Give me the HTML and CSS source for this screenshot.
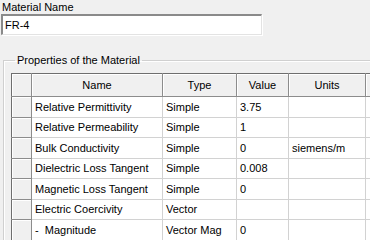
FILE: index.html
```html
<!DOCTYPE html>
<html lang="en">
<head>
    <meta charset="UTF-8">
    <title>Material Properties</title>
    <link rel="stylesheet" href="styles.css">
</head>
<body>

    <!-- Material name -->
    <div class="name-field">
        <label for="mat-name">Material Name</label>
        <div class="textbox" id="mat-name">FR-4</div>
    </div>

    <!-- Properties group -->
    <fieldset class="group">
        <legend>Properties of the Material</legend>
        <table class="grid">
            <colgroup>
                <col class="c-row">
                <col class="c-name">
                <col class="c-type">
                <col class="c-value">
                <col class="c-units">
                <col class="c-rest">
            </colgroup>
            <thead>
                <tr>
                    <th class="corner"></th>
                    <th>Name</th>
                    <th>Type</th>
                    <th>Value</th>
                    <th>Units</th>
                    <th class="rest"></th>
                </tr>
            </thead>
            <tbody>
                <tr><th class="rh"></th><td>Relative Permittivity</td><td>Simple</td><td>3.75</td><td></td><td class="rest"></td></tr>
                <tr><th class="rh"></th><td>Relative Permeability</td><td>Simple</td><td>1</td><td></td><td class="rest"></td></tr>
                <tr><th class="rh"></th><td>Bulk Conductivity</td><td>Simple</td><td>0</td><td>siemens/m</td><td class="rest"></td></tr>
                <tr><th class="rh"></th><td>Dielectric Loss Tangent</td><td>Simple</td><td>0.008</td><td></td><td class="rest"></td></tr>
                <tr><th class="rh"></th><td>Magnetic Loss Tangent</td><td>Simple</td><td>0</td><td></td><td class="rest"></td></tr>
                <tr><th class="rh"></th><td>Electric Coercivity</td><td>Vector</td><td></td><td></td><td class="rest"></td></tr>
                <tr><th class="rh"></th><td>-&nbsp;&nbsp;Magnitude</td><td>Vector Mag</td><td>0</td><td></td><td class="rest"></td></tr>
            </tbody>
        </table>
    </fieldset>

</body>
</html>
```

FILE: styles.css
```css
body {
    margin: 0;
    background: #f0f0f0;
    font-family: "Liberation Sans", Arial, sans-serif;
    font-size: 11px;
    color: #000;
    height: 240px;
    overflow: hidden;
}
.name-field {
    padding: 1px 0 0 1px;
}
.name-field label {
    display: block;
    padding-left: 1px;
    height: 13px;
    line-height: 13px;
}
.textbox {
    width: 254px;
    height: 18px;
    line-height: 19px;
    padding: 0 2px;
    background: #fff;
    border-top: 2px solid #8a8a8a;
    border-left: 2px solid #8a8a8a;
    border-right: 1px solid #e3e3e3;
    border-bottom: 1px solid #e3e3e3;
    box-shadow: 1px 1px 0 #fff;
}
.group {
    margin: 19px 0 0 3px;
    padding: 8px 0 0 7px;
    border: none;
    border-top: 1px solid #d0d0d0;
    border-left: 1px solid #d0d0d0;
    box-shadow: inset 1px 1px 0 #fff;
    min-width: 0;
}
.group legend {
    margin-left: 4px;
    padding: 0 2px;
    line-height: 12px;
}
.grid {
    border-collapse: collapse;
    table-layout: fixed;
    width: 359px;
    margin-top: -1px;
}
.c-row { width: 20px; }
.c-name { width: 131px; }
.c-type { width: 74px; }
.c-value { width: 52px; }
.c-units { width: 77px; }
.c-rest { width: 5px; }
.grid th {
    background: #f0f0f0;
    font-weight: normal;
    height: 22px;
    padding: 0;
    border: 1px solid #8c8c8c;
    box-shadow: inset 1px 1px 0 #fff;
    text-align: center;
}
.grid td {
    background: #fff;
    height: 19.5px;
    padding: 0 3px;
    border: 1px solid #d2d2d2;
    white-space: nowrap;
    overflow: hidden;
}
.grid th.rh {
    height: 19.5px;
    border-color: #8c8c8c;
}
.grid td.rest {
    padding: 0;
}
.grid tr > :first-child {
    border-left: 1px solid #6e6e6e;
}
.grid thead th {
    border-top: 1px solid #6e6e6e;
}
```
